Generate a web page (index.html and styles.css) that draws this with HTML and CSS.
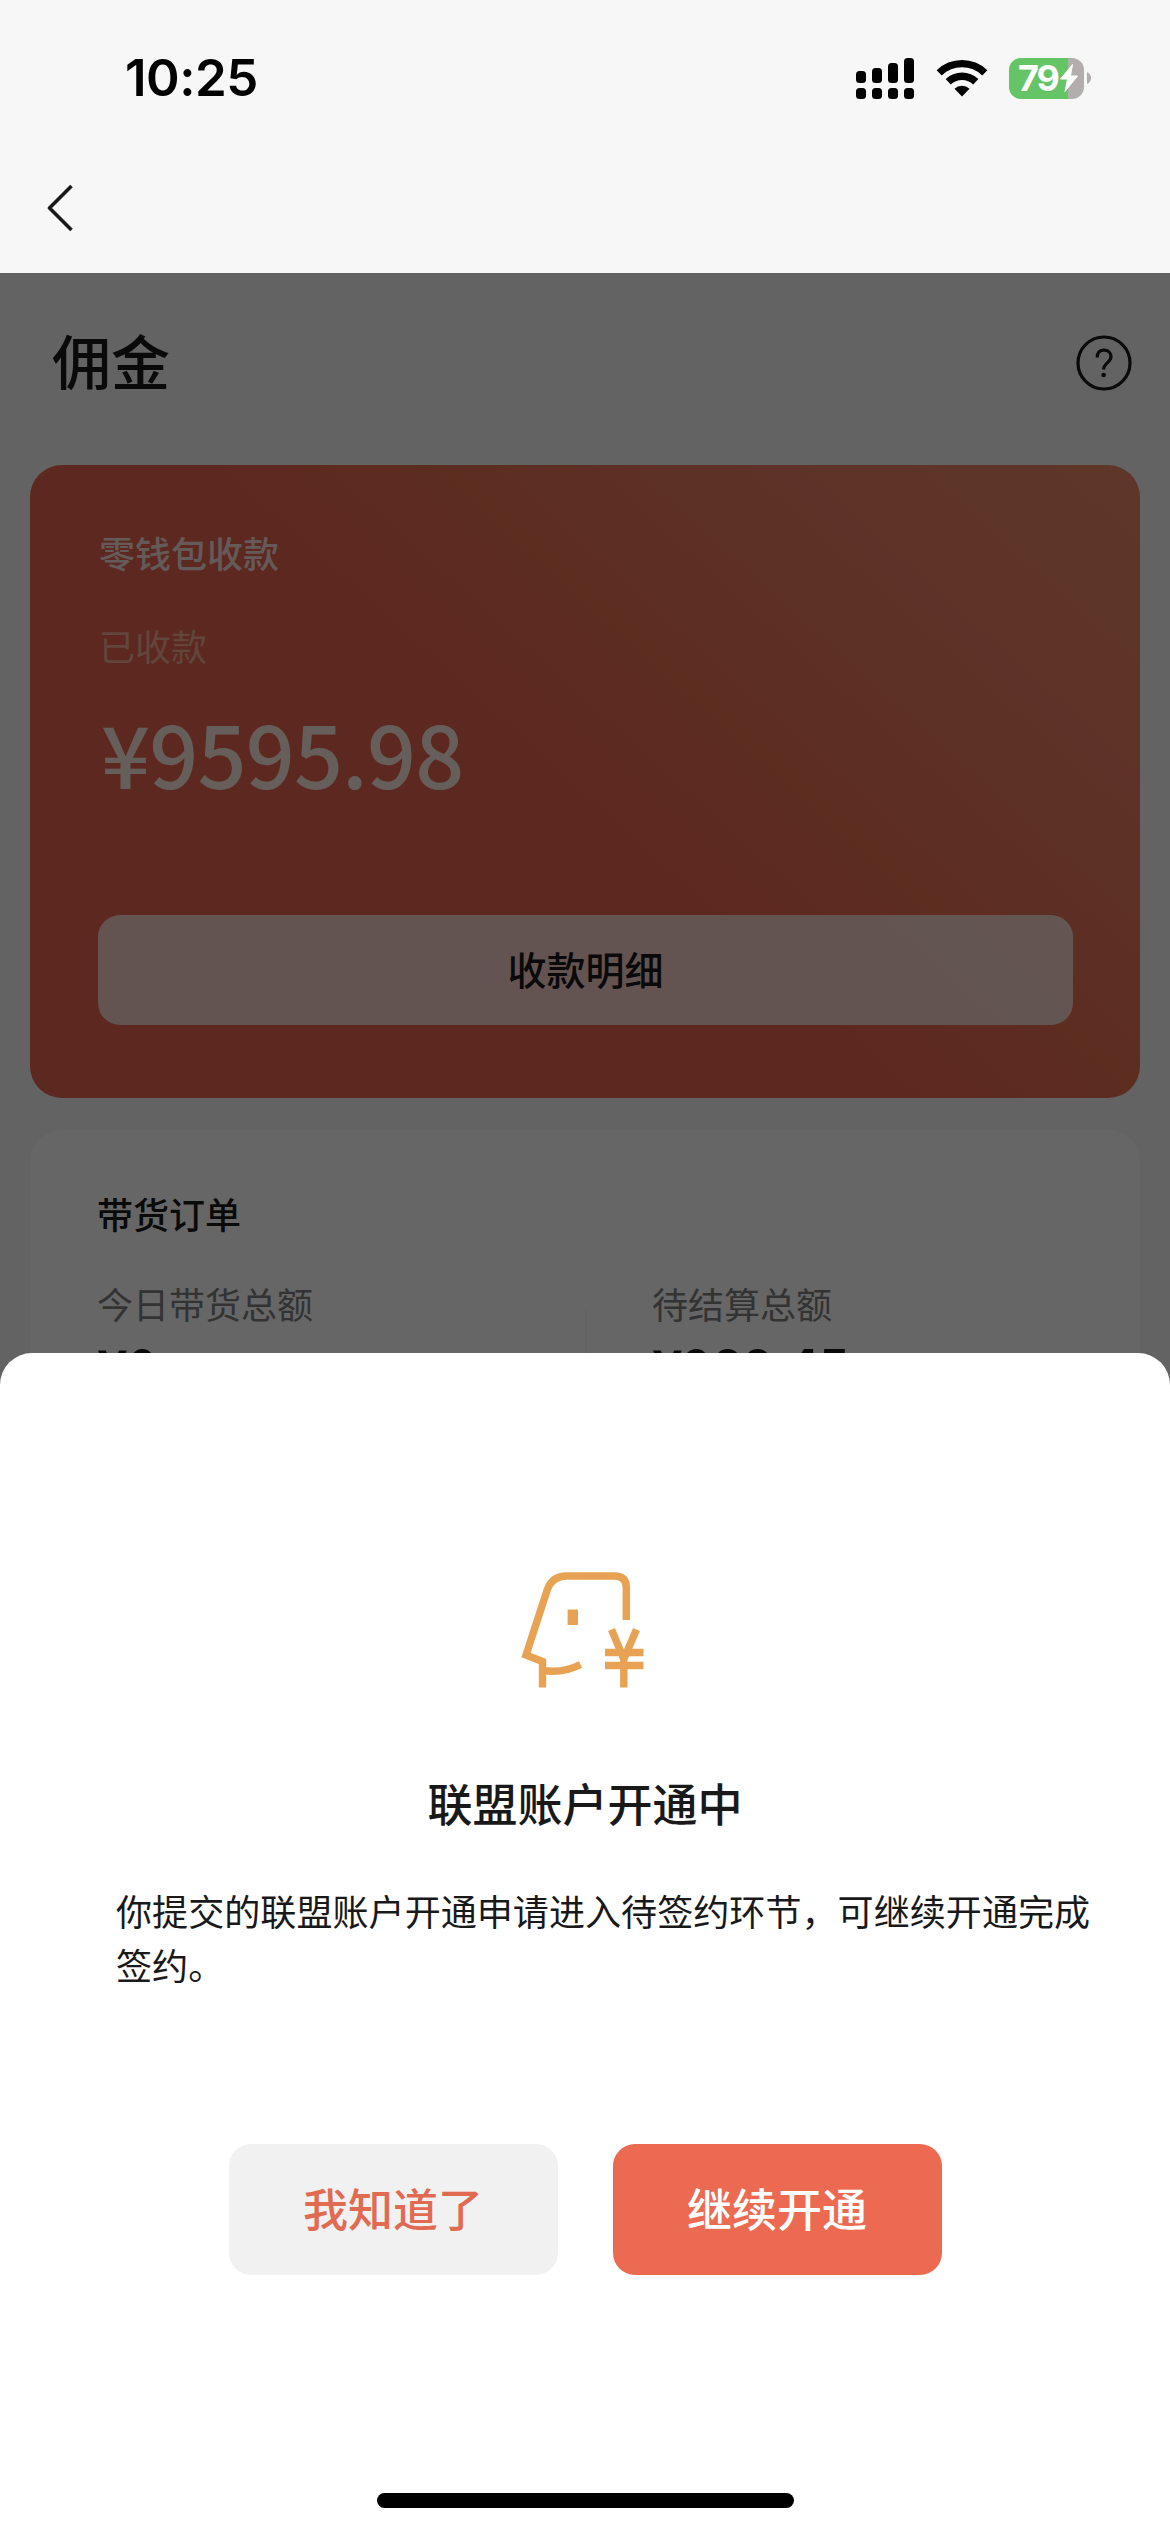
FILE: index.html
```html
<!DOCTYPE html>
<html lang="zh-CN">
<head>
<meta charset="utf-8">
<title>佣金</title>
<link rel="stylesheet" href="styles.css">
</head>
<body>
<div class="screen">
  <header class="top">
    <div class="status">
      <span class="time">10:25</span>
      <div class="status-icons">
        <svg class="signal" width="58" height="41" viewBox="0 0 58 41">
          <rect x="0" y="13" width="10" height="12" rx="3.5"/><rect x="16" y="10" width="10" height="15" rx="3.5"/><rect x="32" y="5" width="10" height="20" rx="3.5"/><rect x="48" y="0" width="10" height="25" rx="3.5"/>
          <rect x="0" y="30" width="10" height="11" rx="3.5"/><rect x="16" y="30" width="10" height="11" rx="3.5"/><rect x="32" y="30" width="10" height="11" rx="3.5"/><rect x="48" y="30" width="10" height="11" rx="3.5"/>
        </svg>
        <svg class="wifi" width="52" height="38" viewBox="0 0 52 38">
          <path d="M3.2 13.8A33 33 0 0 1 48.8 13.8M12.2 22.8A20 20 0 0 1 39.8 22.8" fill="none" stroke="#000" stroke-width="7.4"/>
          <path d="M26 37.500L18.500 29.800A11 11 0 0 1 33.500 29.800Z"/>
        </svg>
        <div class="battery">
          <span class="battery-level">79</span>
          <svg class="bolt" width="18" height="28" viewBox="0 0 18 28"><path d="M12.500 0.500L0.500 15H7.500L5 27.500L17.500 12H10.500Z" fill="#fff" stroke="#fff" stroke-linejoin="round"/></svg>
        </div>
        <svg class="nub" width="4" height="12" viewBox="0 0 4 12"><path d="M0 0Q4 2 4 6T0 12Z" fill="#b1aead"/></svg>
      </div>
    </div>
    <nav class="nav">
      <svg width="27" height="48" viewBox="0 0 27 48"><path d="M24.500 2L2.500 24L24.500 46" fill="none" stroke="#191919" stroke-width="3.600" stroke-linejoin="round"/></svg>
    </nav>
  </header>

  <main class="page">
    <div class="page-head">
      <h1 class="page-title">佣金</h1>
      <svg width="56" height="56" viewBox="0 0 56 56" fill="none" stroke="#191919" stroke-width="3.200">
        <circle cx="28" cy="28" r="26"/>
        <path d="M21.200 22.500C21.200 17.500 23.800 15.200 28 15.200C32.200 15.200 35 17.900 35 21.800C35 27.600 27.600 27.800 27.600 34.500"/>
        <circle cx="27.600" cy="40" r="2.300" fill="#191919" stroke="none"/>
      </svg>
    </div>

    <section class="wallet">
      <h2 class="wallet-title">零钱包收款</h2>
      <p class="wallet-label">已收款</p>
      <p class="wallet-amount">¥9595.98</p>
      <button class="wallet-button">收款明细</button>
    </section>

    <section class="orders">
      <h2 class="orders-title">带货订单</h2>
      <div class="orders-grid">
        <div class="order-cell"><p class="order-label">今日带货总额</p><p class="order-value">¥0</p></div>
        <div class="order-cell order-cell-split"><p class="order-label">待结算总额</p><p class="order-value">¥988.45</p></div>
      </div>
    </section>
    <div class="mask"></div>
  </main>

  <section class="sheet">
    <svg class="sheet-icon" width="124" height="117" viewBox="0 0 124 117" fill="none" stroke="#e8a253" stroke-width="7.400">
      <path d="M105.300 48V15.500Q105.300 4 93.500 4H45.500Q31.500 4 26.500 17L5 83L21.500 89.500V115.500"/>
      <path d="M22 98.500Q42 101.500 59.500 92.500"/>
      <path d="M51.800 37.500V53" stroke-width="10.400"/>
      <path d="M90.500 57.500L102.800 87L115.500 57.500M102.800 80V115.500M84 80.500H122.500M84 93.500H122.500"/>
    </svg>
    <h2 class="sheet-title">联盟账户开通中</h2>
    <p class="sheet-text">你提交的联盟账户开通申请进入待签约环节，可继续开通完成签约。</p>
    <div class="actions">
      <button class="action action-plain">我知道了</button>
      <button class="action action-primary">继续开通</button>
    </div>
    <div class="home-bar"></div>
  </section>
</div>
</body>
</html>
```
FILE: styles.css
```css
* { box-sizing: border-box; margin: 0; padding: 0; }
body { font-family: Inter, "Noto Sans CJK SC", sans-serif; color: #191919; background: #f7f7f7; }
button { border: 0; font-family: inherit; }
svg { display: block; flex: none; }

.screen { display: flex; flex-direction: column; width: 1170px; height: 2532px; overflow: hidden; }

.top { height: 273px; flex: none; background: #f7f7f7; }
.status { display: flex; justify-content: space-between; align-items: center; height: 156px; padding: 0 79px 0 125px; }
.time { font-size: 51px; font-weight: 600; line-height: 60px; letter-spacing: -0.5px; color: #000; }
.status-icons { display: flex; align-items: center; }
.wifi { margin-left: 22px; }
.battery { display: flex; align-items: center; width: 75px; height: 41px; margin-left: 21px; padding-left: 9px; border-radius: 12px; background: linear-gradient(90deg, #65c466 59px, #b1aead 59px); }
.battery-level { width: 42px; font-size: 36px; font-weight: 700; line-height: 41px; letter-spacing: -2px; color: #fff; }
.nub { margin-left: 3px; }
.nav { display: flex; align-items: center; height: 104px; padding-left: 47px; }

.page { position: relative; height: 1080px; flex: none; padding: 0 30px; background: #f7f7f7; }
.mask { position: absolute; inset: 0 0 -60px; background: rgba(0, 0, 0, 0.6); }
.page-head { display: flex; justify-content: space-between; align-items: center; height: 192px; padding: 0 8px 12px 22px; }
.page-title { padding-top: 2px; font-size: 59px; font-weight: 500; line-height: 80px; }

.wallet { height: 633px; padding: 64px 67px 0 68px; border-radius: 32px; background: linear-gradient(42deg, #e86450 48%, #e86f50 60%, #ea7b63 76%, #ec8c69 100%); color: #fff; }
.wallet-title { font-size: 36px; font-weight: 500; line-height: 52px; padding-left: 1px; color: rgba(255, 255, 255, 0.82); }
.wallet-label { margin-top: 41px; padding-left: 1px; font-size: 36px; line-height: 52px; color: rgba(255, 250, 220, 0.5); }
.wallet-amount { margin-top: 23px; padding-left: 3px; font-family: "Noto Sans CJK SC", sans-serif; font-size: 86px; font-weight: 500; line-height: 110px; letter-spacing: -0.8px; color: rgba(255, 250, 240, 0.9); }
.wallet-button { display: block; width: 975px; height: 110px; margin-top: 108px; padding-bottom: 5px; border-radius: 22px; background: rgba(255, 255, 255, 0.7); font-size: 39px; font-weight: 500; color: #191919; }

.orders { height: 400px; margin-top: 32px; padding: 60px 67px 0; border-radius: 32px; background: #fff; }
.orders-title { font-size: 36px; font-weight: 500; line-height: 52px; }
.orders-grid { display: grid; grid-template-columns: 488px 1fr; margin-top: 38px; }
.order-cell-split { position: relative; padding-left: 67px; }
.order-cell-split::before { content: ""; position: absolute; left: 0; top: 30px; width: 2px; height: 80px; background: #f4f4f4; }
.order-label { font-size: 36px; line-height: 52px; color: #7f7f7f; }
.order-value { margin-top: 4px; font-family: "Noto Sans CJK SC", sans-serif; font-size: 52px; font-weight: 700; line-height: 60px; letter-spacing: -0.6px; }

.sheet { position: relative; z-index: 1; display: flex; flex-direction: column; align-items: center; flex: 1; padding-top: 219px; border-radius: 32px 32px 0 0; background: #fff; }
.sheet-icon { margin-right: 4px; }
.sheet-title { margin-top: 84px; font-size: 45px; font-weight: 500; line-height: 66px; }
.sheet-text { width: 976px; margin: 47px 0 0 38px; font-size: 36.1px; line-height: 54px; }
.actions { display: flex; gap: 55px; margin-top: 150px; }
.action { width: 329px; height: 131px; padding-bottom: 5px; border-radius: 22px; font-size: 45px; font-weight: 500; }
.action-plain { background: #f1f1f1; color: #e06b52; }
.action-primary { background: #ed6a52; color: #fff; }
.home-bar { width: 417px; height: 15px; margin-top: 218px; border-radius: 8px; background: #000; }
```
